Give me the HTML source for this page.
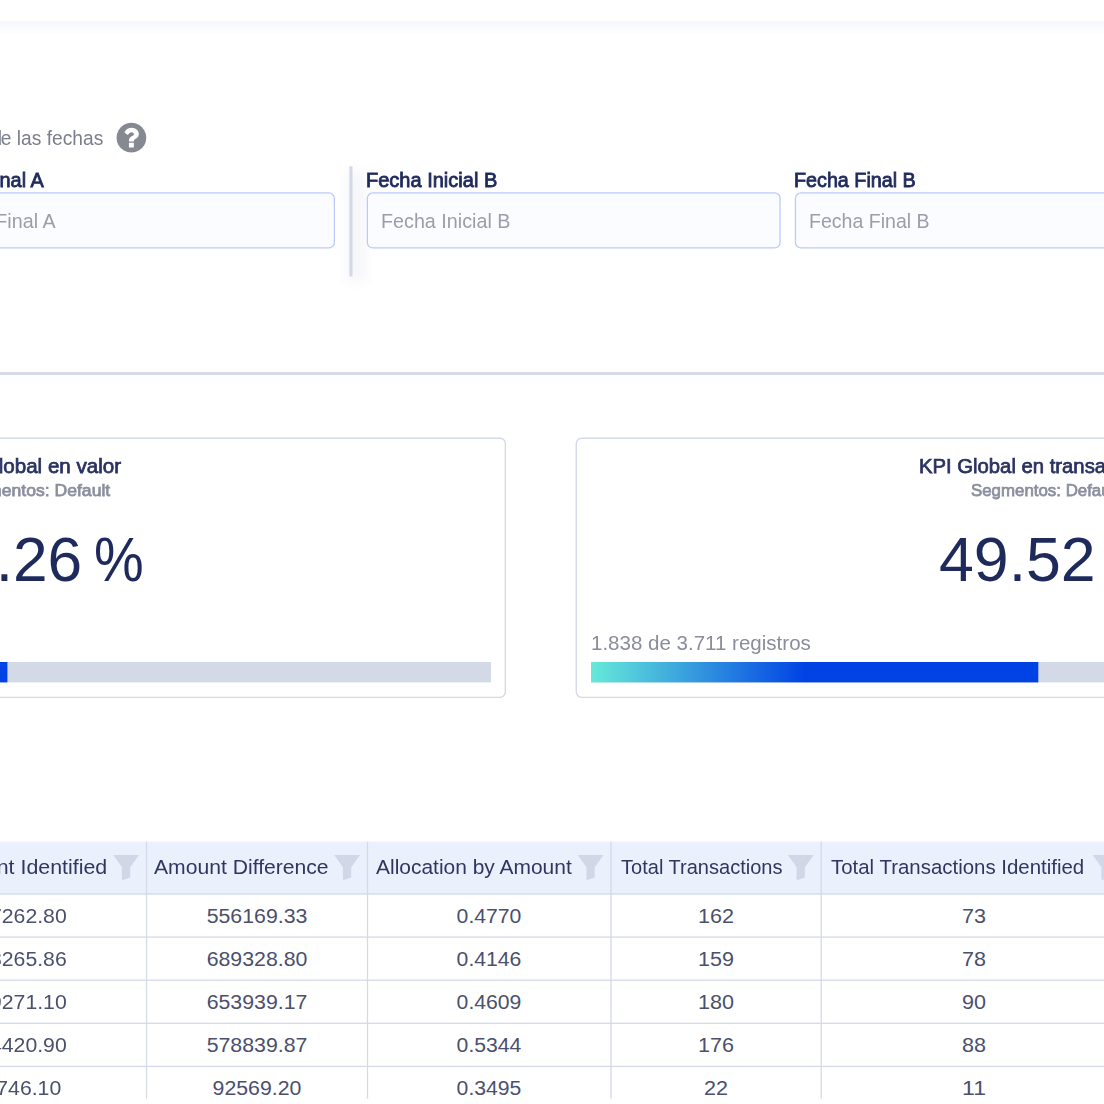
<!DOCTYPE html>
<html lang="es"><head><meta charset="utf-8"><title>KPI</title>
<style>
html,body{margin:0;padding:0;background:#fff}
body{width:1104px;height:1104px;overflow:hidden;position:relative;font-family:"Liberation Sans",sans-serif}
#bg{position:absolute;left:0;top:0}
.t{position:absolute;white-space:nowrap;line-height:1;display:block}
#tb{position:absolute;left:0;top:0;width:1104px;height:1098.7px;overflow:hidden}
</style></head><body>
<svg id="bg" width="1104" height="1104" viewBox="0 0 1104 1104">
<defs><linearGradient id="sh" x1="0" y1="0" x2="0" y2="1"><stop offset="0" stop-color="#f6f8fb"/><stop offset=".45" stop-color="#f8f9fc"/><stop offset=".6" stop-color="#fbfcfd"/><stop offset=".92" stop-color="#fdfdfe"/><stop offset="1" stop-color="#fff"/></linearGradient><linearGradient id="pg" x1="0" y1="0" x2="1" y2="0"><stop offset="0" stop-color="#66ead9"/><stop offset=".48" stop-color="#0042e4"/><stop offset="1" stop-color="#0042e4"/></linearGradient><filter id="bl" x="-300%" y="-20%" width="800%" height="140%"><feGaussianBlur stdDeviation="6"/></filter><clipPath id="tc"><rect x="0" y="0" width="1104" height="1098.7"/></clipPath></defs>
<rect x="0.00" y="21.00" width="1104.00" height="13.00" fill="url(#sh)"/>
<g transform="translate(114.075 120.375) scale(0.019336)"><path fill="#868892" d="M1024 1376v-192q0-14-9-23t-23-9h-192q-14 0-23 9t-9 23v192q0 14 9 23t23 9h192q14 0 23-9t9-23zm256-672q0-88-55.500-163t-138.500-116-170-41q-243 0-371 213-15 24 8 42l132 100q7 6 19 6 16 0 25-12 53-68 86-92 34-24 86-24 48 0 85.500 26t37.500 59q0 38-20 61t-68 45q-63 28-115.500 86.500t-52.500 125.500v36q0 14 9 23t23 9h192q14 0 23-9t9-23q0-19 21.500-49.500t54.500-49.500q32-18 49-28.500t46-35 44.500-48 28-60.500 12.500-81zm384 192q0 209-103 385.500t-279.500 279.500-385.500 103-385.500-103-279.500-279.500-103-385.500 103-385.500 279.500-279.500 385.500-103 385.500 103 279.500 279.500 103 385.500z"/></g>
<rect x="346" y="172" width="20" height="110" fill="#5a6490" opacity=".05" filter="url(#bl)"/>
<rect x="-76.85" y="192.95" width="411.20" height="55.00" fill="#fbfcff" stroke="#bccafa" stroke-width="1.3" rx="5.5"/>
<rect x="367.35" y="192.95" width="412.70" height="55.00" fill="#fbfcff" stroke="#bccafa" stroke-width="1.3" rx="5.5"/>
<rect x="795.45" y="192.95" width="412.70" height="55.00" fill="#fbfcff" stroke="#bccafa" stroke-width="1.3" rx="5.5"/>
<rect x="349.40" y="166.30" width="3.10" height="110.10" fill="#d3d8e8"/>
<rect x="0.00" y="372.10" width="1104.00" height="2.80" fill="#d4d9e8"/>
<rect x="-437.35" y="438.25" width="942.70" height="259.10" fill="#fff" stroke="#d4d9e8" stroke-width="1.4" rx="5.5"/>
<rect x="576.25" y="438.25" width="942.70" height="259.10" fill="#fff" stroke="#d4d9e8" stroke-width="1.4" rx="5.5"/>
<rect x="-423.00" y="662.00" width="914.00" height="20.40" fill="#d3d9e7"/>
<rect x="-423.00" y="662.00" width="430.40" height="20.40" fill="#0042e4"/>
<rect x="591.00" y="662.00" width="914.00" height="20.40" fill="#d3d9e7"/>
<rect x="591.00" y="662.00" width="447.30" height="20.40" fill="url(#pg)"/>
<g clip-path="url(#tc)"><rect x="0.00" y="841.70" width="1104.00" height="52.30" fill="#ebf0fd"/><rect x="0.00" y="893.35" width="1104.00" height="1.30" fill="#d5d9e8"/><rect x="0.00" y="936.45" width="1104.00" height="1.30" fill="#d5d9e8"/><rect x="0.00" y="979.55" width="1104.00" height="1.30" fill="#d5d9e8"/><rect x="0.00" y="1022.65" width="1104.00" height="1.30" fill="#d5d9e8"/><rect x="0.00" y="1065.75" width="1104.00" height="1.30" fill="#d5d9e8"/><rect x="0.00" y="1108.85" width="1104.00" height="1.30" fill="#d5d9e8"/><rect x="0.00" y="1151.95" width="1104.00" height="1.30" fill="#d5d9e8"/><rect x="-114.65" y="841.70" width="1.30" height="300.00" fill="#d5d9e8"/><rect x="145.85" y="841.70" width="1.30" height="300.00" fill="#d5d9e8"/><rect x="366.85" y="841.70" width="1.30" height="300.00" fill="#d5d9e8"/><rect x="610.35" y="841.70" width="1.30" height="300.00" fill="#d5d9e8"/><rect x="820.55" y="841.70" width="1.30" height="300.00" fill="#d5d9e8"/><rect x="1125.35" y="841.70" width="1.30" height="300.00" fill="#d5d9e8"/><path transform="translate(113.40 855.10)" fill="#d2d7e7" d="M-0.2 0 L25.6 0 L16.8 12.2 L16.8 22.4 L9.6 24.8 Q8.5 24.8 8.5 23.6 L8.5 12.2 Z"/><path transform="translate(334.40 855.10)" fill="#d2d7e7" d="M-0.2 0 L25.6 0 L16.8 12.2 L16.8 22.4 L9.6 24.8 Q8.5 24.8 8.5 23.6 L8.5 12.2 Z"/><path transform="translate(577.90 855.10)" fill="#d2d7e7" d="M-0.2 0 L25.6 0 L16.8 12.2 L16.8 22.4 L9.6 24.8 Q8.5 24.8 8.5 23.6 L8.5 12.2 Z"/><path transform="translate(788.10 855.10)" fill="#d2d7e7" d="M-0.2 0 L25.6 0 L16.8 12.2 L16.8 22.4 L9.6 24.8 Q8.5 24.8 8.5 23.6 L8.5 12.2 Z"/><path transform="translate(1092.90 855.10)" fill="#d2d7e7" d="M-0.2 0 L25.6 0 L16.8 12.2 L16.8 22.4 L9.6 24.8 Q8.5 24.8 8.5 23.6 L8.5 12.2 Z"/></g>
</svg>
<span class="t" style="font-size:20.68px;top:127.69px;color:#7b7e8b;right:1101.60px;transform-origin:100% 0;transform:scaleX(0.9438);">Rango d</span>
<span class="t" style="font-size:20.68px;top:127.69px;color:#7b7e8b;right:1000.40px;transform-origin:100% 0;transform:scaleX(0.9289);">e las fechas</span>
<span class="t" style="font-size:20.68px;top:170.09px;color:#1f2a5c;-webkit-text-stroke:0.85px #1f2a5c;left:-78.00px;transform-origin:0 0;transform:scaleX(0.9637);">Fecha Final A</span>
<span class="t" style="font-size:20.68px;top:211.19px;color:#9b9eaa;left:-65.00px;transform-origin:0 0;transform:scaleX(0.9539);">Fecha Final A</span>
<span class="t" style="font-size:20.68px;top:170.09px;color:#1f2a5c;-webkit-text-stroke:0.85px #1f2a5c;left:366.20px;transform-origin:0 0;transform:scaleX(0.9679);">Fecha Inicial B</span>
<span class="t" style="font-size:20.68px;top:211.19px;color:#9b9eaa;left:380.70px;transform-origin:0 0;transform:scaleX(0.9546);">Fecha Inicial B</span>
<span class="t" style="font-size:20.68px;top:170.09px;color:#1f2a5c;-webkit-text-stroke:0.85px #1f2a5c;left:794.30px;transform-origin:0 0;transform:scaleX(0.9546);">Fecha Final B</span>
<span class="t" style="font-size:20.68px;top:211.19px;color:#9b9eaa;left:808.80px;transform-origin:0 0;transform:scaleX(0.9457);">Fecha Final B</span>
<span class="t" style="font-size:20.68px;top:455.89px;color:#2a3261;-webkit-text-stroke:0.75px #2a3261;right:982.60px;transform-origin:100% 0;transform:scaleX(0.9954);">KPI Global en valor</span>
<span class="t" style="font-size:17.23px;top:481.72px;color:#8b8f9e;-webkit-text-stroke:0.75px #8b8f9e;right:994.00px;transform-origin:100% 0;transform:scaleX(1.0215);">Segmentos: Default</span>
<span class="t" style="font-size:62.04px;top:529.28px;color:#1f2a5c;right:1021.50px;transform-origin:100% 0;transform:scaleX(1.0043);">46.26</span>
<span class="t" style="font-size:62.04px;top:529.28px;color:#1f2a5c;left:93.50px;transform-origin:0 0;transform:scaleX(0.9014);">%</span>
<span class="t" style="font-size:20.68px;top:455.89px;color:#2a3261;-webkit-text-stroke:0.75px #2a3261;left:918.60px;transform-origin:0 0;transform:scaleX(0.9806);">KPI Global en transacciones</span>
<span class="t" style="font-size:17.23px;top:481.72px;color:#8b8f9e;-webkit-text-stroke:0.75px #8b8f9e;left:971.30px;transform-origin:0 0;transform:scaleX(0.9789);">Segmentos: Default</span>
<span class="t" style="font-size:62.04px;top:529.28px;color:#1f2a5c;left:938.60px;transform-origin:0 0;transform:scaleX(1.0093);">49.52</span>
<span class="t" style="font-size:62.04px;top:529.28px;color:#1f2a5c;left:1110.00px;transform-origin:0 0;transform:scaleX(0.9014);">%</span>
<span class="t" style="font-size:20.68px;top:633.29px;color:#8a8d9a;left:591.10px;transform-origin:0 0;transform:scaleX(0.9927);">1.838 de 3.711 registros</span>
<div id="tb">
<span class="t" style="font-size:20.68px;top:856.79px;color:#2f3761;right:996.40px;transform-origin:100% 0;transform:scaleX(1.0335);">Total Amount Identified</span>
<span class="t" style="font-size:20.68px;top:856.79px;color:#2f3761;left:153.80px;transform-origin:0 0;transform:scaleX(1.0222);">Amount Difference</span>
<span class="t" style="font-size:20.68px;top:856.79px;color:#2f3761;left:376.30px;transform-origin:0 0;transform:scaleX(1.0139);">Allocation by Amount</span>
<span class="t" style="font-size:20.68px;top:856.79px;color:#2f3761;left:621.10px;transform-origin:0 0;transform:scaleX(0.9695);">Total Transactions</span>
<span class="t" style="font-size:20.68px;top:856.79px;color:#2f3761;left:831.10px;transform-origin:0 0;transform:scaleX(0.9881);">Total Transactions Identified</span>
<span class="t" style="font-size:20.68px;top:905.59px;color:#4a506e;right:1037.20px;transform-origin:100% 0;transform:scaleX(1.0272);">507262.80</span>
<span class="t" style="font-size:20.68px;top:905.59px;color:#4a506e;left:257.00px;transform:translateX(-50%) scaleX(1.0307);">556169.33</span>
<span class="t" style="font-size:20.68px;top:905.59px;color:#4a506e;left:489.25px;transform:translateX(-50%) scaleX(1.0245);">0.4770</span>
<span class="t" style="font-size:20.68px;top:905.59px;color:#4a506e;left:716.10px;transform:translateX(-50%) scaleX(1.0421);">162</span>
<span class="t" style="font-size:20.68px;top:905.59px;color:#4a506e;left:973.60px;transform:translateX(-50%) scaleX(1.0421);">73</span>
<span class="t" style="font-size:20.68px;top:948.69px;color:#4a506e;right:1037.20px;transform-origin:100% 0;transform:scaleX(1.0272);">488265.86</span>
<span class="t" style="font-size:20.68px;top:948.69px;color:#4a506e;left:257.00px;transform:translateX(-50%) scaleX(1.0307);">689328.80</span>
<span class="t" style="font-size:20.68px;top:948.69px;color:#4a506e;left:489.25px;transform:translateX(-50%) scaleX(1.0245);">0.4146</span>
<span class="t" style="font-size:20.68px;top:948.69px;color:#4a506e;left:716.10px;transform:translateX(-50%) scaleX(1.0421);">159</span>
<span class="t" style="font-size:20.68px;top:948.69px;color:#4a506e;left:973.60px;transform:translateX(-50%) scaleX(1.0421);">78</span>
<span class="t" style="font-size:20.68px;top:991.79px;color:#4a506e;right:1037.20px;transform-origin:100% 0;transform:scaleX(1.0272);">559271.10</span>
<span class="t" style="font-size:20.68px;top:991.79px;color:#4a506e;left:257.00px;transform:translateX(-50%) scaleX(1.0307);">653939.17</span>
<span class="t" style="font-size:20.68px;top:991.79px;color:#4a506e;left:489.25px;transform:translateX(-50%) scaleX(1.0245);">0.4609</span>
<span class="t" style="font-size:20.68px;top:991.79px;color:#4a506e;left:716.10px;transform:translateX(-50%) scaleX(1.0421);">180</span>
<span class="t" style="font-size:20.68px;top:991.79px;color:#4a506e;left:973.60px;transform:translateX(-50%) scaleX(1.0421);">90</span>
<span class="t" style="font-size:20.68px;top:1034.89px;color:#4a506e;right:1037.20px;transform-origin:100% 0;transform:scaleX(1.0272);">664420.90</span>
<span class="t" style="font-size:20.68px;top:1034.89px;color:#4a506e;left:257.00px;transform:translateX(-50%) scaleX(1.0307);">578839.87</span>
<span class="t" style="font-size:20.68px;top:1034.89px;color:#4a506e;left:489.25px;transform:translateX(-50%) scaleX(1.0245);">0.5344</span>
<span class="t" style="font-size:20.68px;top:1034.89px;color:#4a506e;left:716.10px;transform:translateX(-50%) scaleX(1.0421);">176</span>
<span class="t" style="font-size:20.68px;top:1034.89px;color:#4a506e;left:973.60px;transform:translateX(-50%) scaleX(1.0421);">88</span>
<span class="t" style="font-size:20.68px;top:1077.99px;color:#4a506e;right:1043.20px;transform-origin:100% 0;transform:scaleX(1.0272);">49746.10</span>
<span class="t" style="font-size:20.68px;top:1077.99px;color:#4a506e;left:257.00px;transform:translateX(-50%) scaleX(1.0292);">92569.20</span>
<span class="t" style="font-size:20.68px;top:1077.99px;color:#4a506e;left:489.25px;transform:translateX(-50%) scaleX(1.0245);">0.3495</span>
<span class="t" style="font-size:20.68px;top:1077.99px;color:#4a506e;left:716.10px;transform:translateX(-50%) scaleX(1.0421);">22</span>
<span class="t" style="font-size:20.68px;top:1077.99px;color:#4a506e;left:973.60px;transform:translateX(-50%) scaleX(1.1164);">11</span>
<span class="t" style="font-size:20.68px;top:1121.09px;color:#4a506e;right:1043.20px;transform-origin:100% 0;transform:scaleX(1.0272);">51230.40</span>
<span class="t" style="font-size:20.68px;top:1121.09px;color:#4a506e;left:257.00px;transform:translateX(-50%) scaleX(1.0292);">88410.75</span>
<span class="t" style="font-size:20.68px;top:1121.09px;color:#4a506e;left:489.25px;transform:translateX(-50%) scaleX(1.0245);">0.3669</span>
<span class="t" style="font-size:20.68px;top:1121.09px;color:#4a506e;left:716.10px;transform:translateX(-50%) scaleX(1.0421);">25</span>
<span class="t" style="font-size:20.68px;top:1121.09px;color:#4a506e;left:973.60px;transform:translateX(-50%) scaleX(1.0421);">12</span>
</div>
</body></html>
